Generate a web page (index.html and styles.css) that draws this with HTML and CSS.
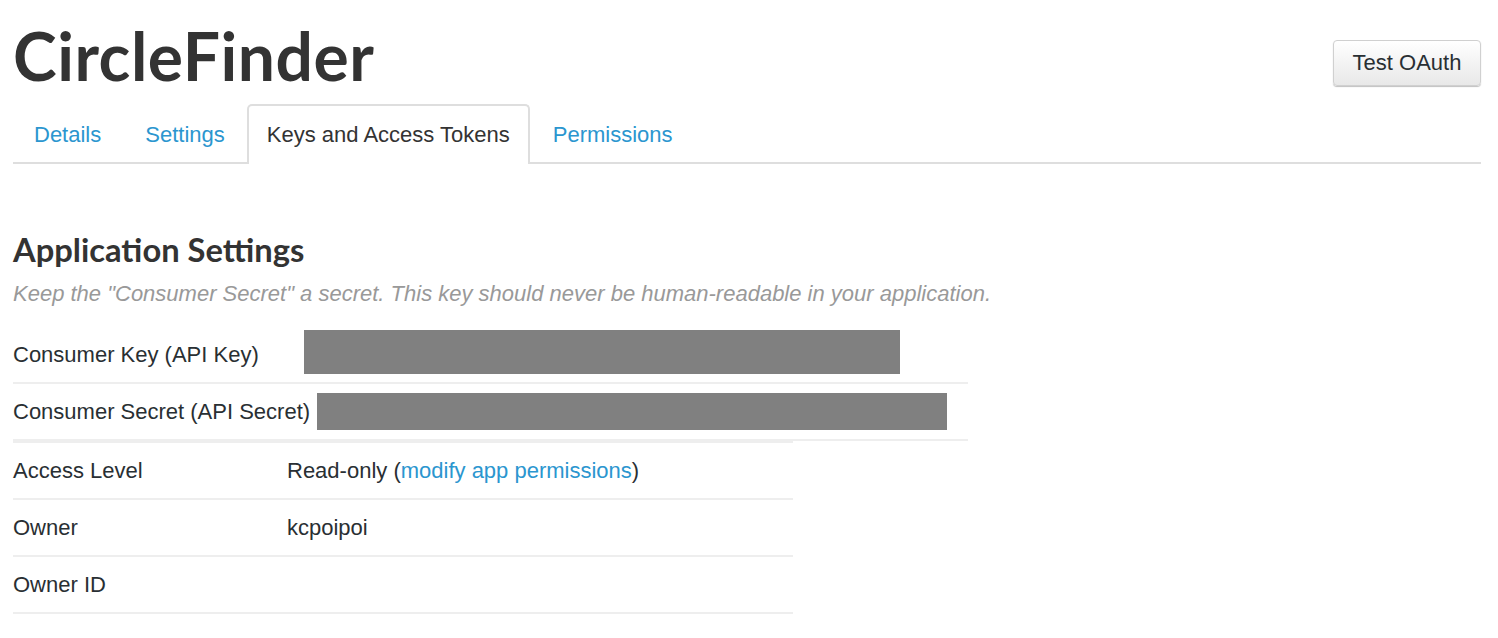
FILE: index.html
```html
<!DOCTYPE html>
<html>
<head>
<meta charset="utf-8">
<link rel="stylesheet" href="styles.css">
</head>
<body>
<div class="page">
  <header class="app-header">
    <h1 class="app-title">CircleFinder</h1>
    <button class="btn">Test OAuth</button>
  </header>
  <nav class="tabs">
    <a class="tab" href="#">Details</a>
    <a class="tab" href="#">Settings</a>
    <a class="tab active" href="#">Keys and Access Tokens</a>
    <a class="tab" href="#">Permissions</a>
  </nav>
  <section class="settings">
    <h2 class="section-title">Application Settings</h2>
    <p class="hint">Keep the "Consumer Secret" a secret. This key should never be human-readable in your application.</p>
    <div class="keys">
      <div class="row">
        <span class="label label-key">Consumer Key (API Key)</span>
        <span class="redact redact-key"></span>
      </div>
      <div class="row">
        <span class="label label-secret">Consumer Secret (API Secret)</span>
        <span class="redact redact-secret"></span>
      </div>
    </div>
    <div class="details">
      <div class="drow">
        <span class="dlabel">Access Level</span>
        <span class="dvalue">Read-only (<a href="#" class="link">modify app permissions</a>)</span>
      </div>
      <div class="drow">
        <span class="dlabel">Owner</span>
        <span class="dvalue">kcpoipoi</span>
      </div>
      <div class="drow">
        <span class="dlabel">Owner ID</span>
        <span class="dvalue"></span>
      </div>
    </div>
  </section>
</div>
</body>
</html>
```

FILE: styles.css
```css
* { box-sizing: border-box; }
html, body { margin: 0; padding: 0; background: #fff; }
body {
  font-family: "Liberation Sans", Arial, sans-serif;
  font-size: 22px;
  color: #292f33;
}
.page {
  padding: 0 17px 0 13px;
}
.app-header {
  display: flex;
  justify-content: space-between;
  align-items: flex-start;
  height: 104px;
}
.app-title {
  margin: 0;
  padding-top: 16px;
  font-family: Lato, "Open Sans", sans-serif;
  font-weight: 700;
  font-size: 66px;
  line-height: 80px;
  color: #333;
  letter-spacing: 0.5px;
}
.btn {
  margin-top: 40px;
  width: 148px;
  height: 46px;
  font-family: "Liberation Sans", Arial, sans-serif;
  font-size: 22px;
  color: #292f33;
  background: linear-gradient(#fff, #e8e8e8);
  border: 1px solid #d0d0d0;
  border-radius: 4px;
  box-shadow: 0 1px 1px rgba(0,0,0,0.25);
  padding: 0;
}
.tabs {
  display: flex;
  border-bottom: 2px solid #dedede;
  height: 60px;
}
.tab {
  display: flex;
  align-items: center;
  padding: 0 19px;
  margin-right: 2px;
  height: 60px;
  color: #2b96cf;
  text-decoration: none;
  font-size: 22px;
  border: 2px solid transparent;
  border-bottom: none;
  border-radius: 5px 5px 0 0;
}
.tab:nth-child(2) { margin-right: 1px; }
.tab.active {
  color: #333;
  border-color: #dedede;
  background: #fff;
  margin-bottom: -2px;
  padding: 0 18px 0 18px;
}
.settings {
  padding-top: 66px;
}
.section-title {
  margin: 0;
  font-family: Lato, "Open Sans", sans-serif;
  font-weight: 700;
  font-size: 32.7px;
  line-height: 40px;
  color: #333;
}
.hint {
  margin: 12px 0 0;
  font-style: italic;
  color: #999;
  font-size: 22px;
  line-height: 24px;
}
.keys {
  width: 955px;
  margin-top: 21px;
}
.row {
  display: flex;
  align-items: center;
  height: 57px;
  border-bottom: 2px solid #eee;
}
.label { white-space: nowrap; flex: none; }
.label-key { width: 291px; }
.label-secret { width: 304px; }
.redact { display: block; background: #808080; flex: none; }
.redact-key { width: 596px; height: 44px; margin-top: -6px; }
.redact-secret { width: 630px; height: 37px; }
.details {
  width: 780px;
  border-top: 2px solid #eee;
}
.drow {
  display: flex;
  align-items: center;
  height: 57px;
  border-bottom: 2px solid #eee;
}
.dlabel { width: 274px; flex: none; }
.dvalue { color: #292f33; }
.link { color: #2b96cf; text-decoration: none; }
```
